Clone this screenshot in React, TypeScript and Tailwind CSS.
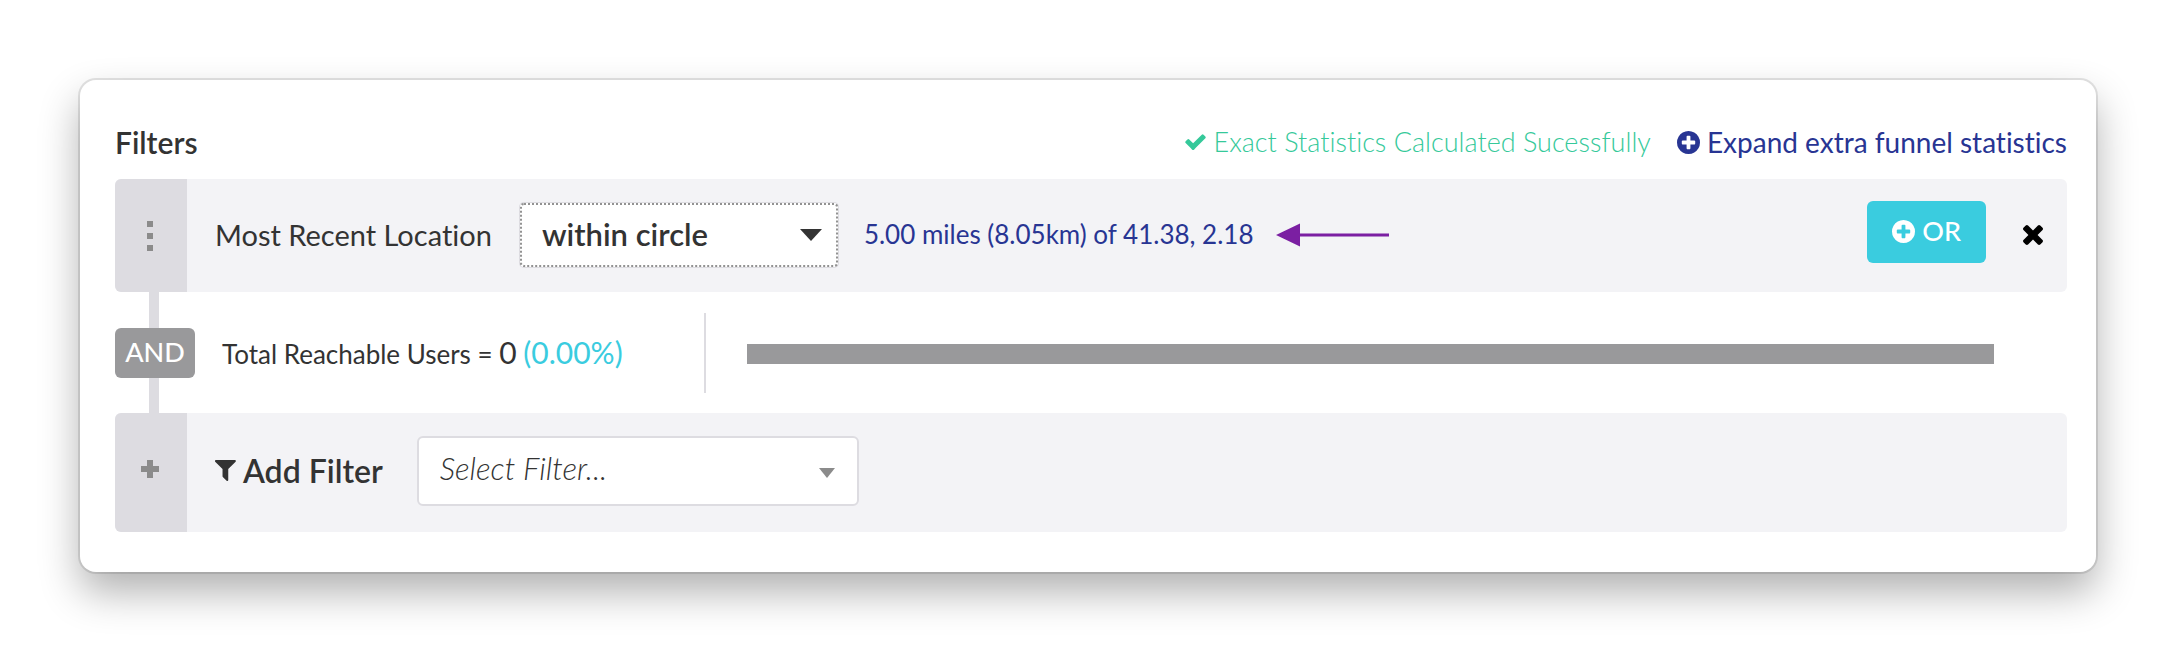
import React from "react"

type IconProps = { className?: string }

const PlusCircleIcon = ({ className }: IconProps) => (
  <svg viewBox="0 0 1536 1536" fill="currentColor" aria-hidden="true" className={className}>
    <path d="M1216 832v-128q0-26-19-45t-45-19h-256v-256q0-26-19-45t-45-19h-128q-26 0-45 19t-19 45v256h-256q-26 0-45 19t-19 45v128q0 26 19 45t45 19h256v256q0 26 19 45t45 19h128q26 0 45-19t19-45v-256h256q26 0 45-19t19-45zm320-64q0 209-103 385.5t-279.5 279.5-385.5 103-385.5-103-279.5-279.5-103-385.5 103-385.5 279.5-279.5 385.5-103 385.5 103 279.5 279.5 103 385.5z" />
  </svg>
)

const CheckIcon = ({ className }: IconProps) => (
  <svg viewBox="121 309 1550 1213" fill="currentColor" aria-hidden="true" className={className}>
    <path d="M1671 566q0 40-28 68l-724 724-136 136q-28 28-68 28t-68-28l-136-136-362-362q-28-28-28-68t28-68l136-136q28-28 68-28t68 28l294 295 656-657q28-28 68-28t68 28l136 136q28 28 28 68z" />
  </svg>
)

const TimesIcon = ({ className }: IconProps) => (
  <svg viewBox="110 366 1188 1188" fill="currentColor" aria-hidden="true" className={className}>
    <path d="M1298 1322q0 40-28 68l-136 136q-28 28-68 28t-68-28l-294-294-294 294q-28 28-68 28t-68-28l-136-136q-28-28-28-68t28-68l294-294-294-294q-28-28-28-68t28-68l136-136q28-28 68-28t68 28l294 294 294-294q28-28 68-28t68 28l136 136q28 28 28 68t-28 68l-294 294 294 294q28 28 28 68z" />
  </svg>
)

const FunnelIcon = ({ className }: IconProps) => (
  <svg viewBox="206 256 1395 1408" fill="currentColor" aria-hidden="true" className={className}>
    <path d="M1595 295q17 41-14 70l-493 493v742q0 42-39 59-13 5-25 5-27 0-45-19l-256-256q-19-19-19-45v-486l-493-493q-31-29-14-70 17-39 59-39h1280q42 0 59 39z" />
  </svg>
)

const CaretIcon = ({ className }: IconProps) => (
  <svg viewBox="0 0 22 12" preserveAspectRatio="none" fill="currentColor" aria-hidden="true" className={className}>
    <path d="M0 0h22L11 12z" />
  </svg>
)

const Header = () => (
  <header className="mb-[15px] flex min-h-11 items-center justify-between leading-10">
    <h2 className="text-[30px] font-semibold">Filters</h2>
    <div className="flex items-center gap-[26px]">
      <p className="flex items-center gap-[7px] text-[27px] font-light text-[#35c99a]">
        <CheckIcon className="h-4 w-[21px]" />
        Exact Statistics Calculated Sucessfully
      </p>
      <a href="#stats" className="flex items-center gap-[7px] text-[28px] text-[#283593]">
        <PlusCircleIcon className="size-[23px]" />
        Expand extra funnel statistics
      </a>
    </div>
  </header>
)

const LocationFilter = () => (
  <div className="flex min-h-[113px] overflow-hidden rounded-md bg-[#f3f3f6]">
    <button type="button" aria-label="Reorder filter" className="flex w-[72px] flex-col items-center justify-center gap-1.5 bg-[#dddce1] pr-0.5">
      <span className="size-1.5 bg-[#8b8b8b]" />
      <span className="size-1.5 bg-[#8b8b8b]" />
      <span className="size-1.5 bg-[#8b8b8b]" />
    </button>
    <div className="flex flex-1 items-center pr-6 pb-0.5 pl-7">
      <label htmlFor="location-operator" className="mr-7 text-[29px]">
        Most Recent Location
      </label>
      <div className="relative mr-[26px]">
        <select
          id="location-operator"
          className="h-16 w-[318px] appearance-none rounded-sm border-2 border-dotted border-[#929292] bg-white pl-5 text-[31px] font-semibold shadow-[0_0_0_1px_#dddce1] outline-none"
        >
          <option>within circle</option>
        </select>
        <CaretIcon className="pointer-events-none absolute top-[26px] right-4 h-3 w-[22px]" />
      </div>
      <a href="#location" className="text-[26px] text-[#283593]">
        5.00 miles (8.05km) of 41.38, 2.18
      </a>
      <svg viewBox="0 0 113 24" className="ml-[22px] h-6 w-[113px]" aria-hidden="true">
        <path d="M0 12 24 0.500V23.500z M22 10.500h91v3H22z" fill="#7b1fa2" />
      </svg>
      <button type="button" className="mb-1.5 ml-auto flex h-[62px] items-center gap-[7px] rounded-md bg-[#3accdf] px-[25px] text-[27px] font-medium text-white">
        <PlusCircleIcon className="size-[23px]" />
        OR
      </button>
      <button type="button" aria-label="Remove filter" className="ml-[37px] text-black">
        <TimesIcon className="size-[20px]" />
      </button>
    </div>
  </div>
)

const ReachableUsers = () => (
  <div className="flex h-[121px] items-center">
    <div className="flex h-full w-20 flex-col">
      <span className="ml-[34px] w-2.5 flex-1 bg-[#dddce1]" />
      <span className="flex h-[50px] items-center justify-center rounded-md bg-[#99999b] text-[27px] font-medium text-white">
        AND
      </span>
      <span className="ml-[34px] w-2.5 flex-1 bg-[#dddce1]" />
    </div>
    <p className="w-[509px] pl-[27px] text-[26px]">
      Total Reachable Users = <span className="text-[30px]">0</span>{" "}
      <span className="text-[30px] text-[#3accdf]">(0.00%)</span>
    </p>
    <div className="mr-[41px] h-20 w-0.5 bg-[#dddce1]" />
    <div className="mt-[3px] mr-[73px] h-5 flex-1 bg-[#99999b]" />
  </div>
)

const AddFilter = () => (
  <div className="flex min-h-[119px] overflow-hidden rounded-md bg-[#f3f3f6]">
    <button type="button" aria-label="Add filter" className="flex w-[72px] items-center justify-center bg-[#dddce1] pr-0.5 pb-2 text-[#8b8b8b]">
      <svg viewBox="0 0 18 18" className="size-[18px]" fill="currentColor" aria-hidden="true">
        <path d="M6 0h6v6h6v6h-6v6H6v-6H0V6h6z" />
      </svg>
    </button>
    <div className="flex flex-1 items-center pb-1 pl-7">
      <label htmlFor="new-filter" className="mr-[34px] flex items-center gap-[7px] text-[32px] font-semibold">
        <FunnelIcon className="size-[21px]" />
        Add Filter
      </label>
      <div className="relative">
        <select
          id="new-filter"
          className="h-[70px] w-[442px] appearance-none rounded-md border-2 border-[#dddce1] bg-white pb-1 pl-[21px] text-[31px] font-light italic outline-none"
        >
          <option>Select Filter...</option>
        </select>
        <CaretIcon className="pointer-events-none absolute top-8 right-6 h-2.5 w-4 text-[#8b8b8b]" />
      </div>
    </div>
  </div>
)

const App = () => {
  return (
    <div className="bg-white p-20 font-['Lato','Liberation_Sans',sans-serif] text-[#333333] [font-variant-ligatures:none]">
      <main className="rounded-2xl bg-white pt-10 pr-[29px] pb-10 pl-[35px] shadow-[0_0_0_2px_rgba(0,0,0,0.1),0_20px_40px_rgba(0,0,0,0.31)]">
        <Header />
        <LocationFilter />
        <ReachableUsers />
        <AddFilter />
      </main>
    </div>
  )
}

export default App
